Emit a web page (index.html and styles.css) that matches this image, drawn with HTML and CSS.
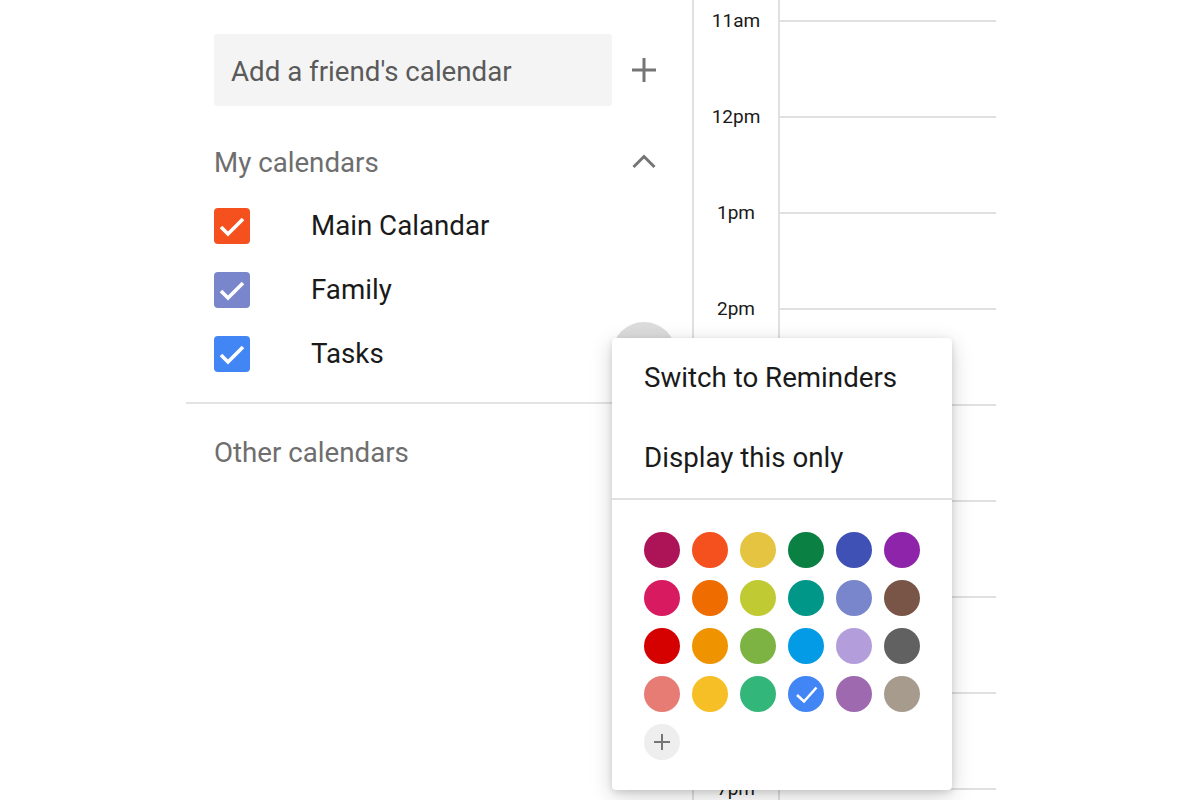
FILE: index.html
```html
<!DOCTYPE HTML>
<html>
<head>
  <meta charset="UTF-8">
  <title>Calendars</title>
  <link rel="stylesheet" href="styles.css">
</head>
<body>
  <div class="page">
    <aside class="sidebar">
      <div class="add-row">
        <div class="add-input">Add a friend's calendar</div>
        <span class="icon-btn">
          <svg width="24" height="24" viewBox="0 0 24 24"><path d="M12 0v24M0 12h24" stroke="#757575" stroke-width="3" fill="none"/></svg>
        </span>
      </div>

      <div class="section-head">
        <span>My calendars</span>
        <span class="icon-btn">
          <svg width="24" height="24" viewBox="0 0 24 24"><polyline points="1.5,16 12,5.5 22.5,16" stroke="#757575" stroke-width="3" fill="none"/></svg>
        </span>
      </div>

      <ul class="cal-list">
        <li class="cal-item">
          <span class="check orange"><svg width="36" height="36" viewBox="0 0 36 36"><polyline points="7,19 14,26 29,11" stroke="#fff" stroke-width="3.6" fill="none"/></svg></span>
          <span class="cal-name">Main Calandar</span>
        </li>
        <li class="cal-item">
          <span class="check lavender"><svg width="36" height="36" viewBox="0 0 36 36"><polyline points="7,19 14,26 29,11" stroke="#fff" stroke-width="3.6" fill="none"/></svg></span>
          <span class="cal-name">Family</span>
        </li>
        <li class="cal-item">
          <span class="check blue"><svg width="36" height="36" viewBox="0 0 36 36"><polyline points="7,19 14,26 29,11" stroke="#fff" stroke-width="3.6" fill="none"/></svg></span>
          <span class="cal-name">Tasks</span>
          <span class="more-btn"></span>
        </li>
      </ul>

      <div class="divider"></div>

      <div class="section-head other">Other calendars</div>
    </aside>

    <section class="timeline">
      <div class="hours">
        <div class="hour">11am</div>
        <div class="hour">12pm</div>
        <div class="hour">1pm</div>
        <div class="hour">2pm</div>
        <div class="hour">3pm</div>
        <div class="hour">4pm</div>
        <div class="hour">5pm</div>
        <div class="hour">6pm</div>
        <div class="hour">7pm</div>
      </div>
      <div class="grid">
        <div class="slot"></div>
        <div class="slot"></div>
        <div class="slot"></div>
        <div class="slot"></div>
        <div class="slot"></div>
        <div class="slot"></div>
        <div class="slot"></div>
        <div class="slot"></div>
        <div class="slot"></div>
      </div>
    </section>

    <div class="menu">
      <div class="menu-item">Switch to Reminders</div>
      <div class="menu-item">Display this only</div>
      <div class="menu-sep"></div>
      <div class="swatches">
        <span class="swatch" style="background:#ad1457"></span>
        <span class="swatch" style="background:#f4511e"></span>
        <span class="swatch" style="background:#e4c441"></span>
        <span class="swatch" style="background:#0b8043"></span>
        <span class="swatch" style="background:#3f51b5"></span>
        <span class="swatch" style="background:#8e24aa"></span>

        <span class="swatch" style="background:#d81b60"></span>
        <span class="swatch" style="background:#ef6c00"></span>
        <span class="swatch" style="background:#c0ca33"></span>
        <span class="swatch" style="background:#009688"></span>
        <span class="swatch" style="background:#7986cb"></span>
        <span class="swatch" style="background:#795548"></span>

        <span class="swatch" style="background:#d50000"></span>
        <span class="swatch" style="background:#f09300"></span>
        <span class="swatch" style="background:#7cb342"></span>
        <span class="swatch" style="background:#039be5"></span>
        <span class="swatch" style="background:#b39ddb"></span>
        <span class="swatch" style="background:#616161"></span>

        <span class="swatch" style="background:#e67c73"></span>
        <span class="swatch" style="background:#f6bf26"></span>
        <span class="swatch" style="background:#33b679"></span>
        <span class="swatch" style="background:#4285f4"><svg width="36" height="36" viewBox="0 0 36 36"><polyline points="9,19 16,25.5 28.5,11.5" stroke="#fff" stroke-width="2.6" fill="none"/></svg></span>
        <span class="swatch" style="background:#9e69af"></span>
        <span class="swatch" style="background:#a79b8e"></span>

        <span class="swatch add-swatch"><svg width="18" height="18" viewBox="0 0 18 18"><path d="M9 1v16M1 9h16" stroke="#757575" stroke-width="2" fill="none"/></svg></span>
      </div>
    </div>
  </div>
</body>
</html>
```

FILE: styles.css
```css
body { margin: 0; background: #fff; font-family: Roboto, "Liberation Sans", Arial, sans-serif; color: #212121; overflow: hidden; }

.page { position: relative; display: flex; height: 800px; overflow: hidden; }

/* left column */
.sidebar {
  margin-left: 186px;
  width: 506px;
  padding: 34px 36px 0 28px;
  box-sizing: border-box;
  font-size: 27.7px;
}

.add-row { display: flex; align-items: center; justify-content: space-between; }
.add-input {
  width: 398px;
  height: 72px;
  box-sizing: border-box;
  padding: 3px 0 0 17px;
  line-height: 69px;
  background: #f4f4f4;
  border-radius: 3px;
  color: #5a5a5a;
}
.icon-btn { display: flex; width: 24px; height: 24px; }

.section-head {
  display: flex;
  align-items: center;
  justify-content: space-between;
  height: 48px;
  line-height: 48px;
  margin-top: 33px;
  color: #6e6e6e;
}
.section-head.other { margin-top: 25px; }

.cal-list { list-style: none; margin: 7px 0 0; padding: 0; }
.cal-item { display: flex; align-items: center; height: 64px; line-height: 64px; }
.check { display: flex; width: 36px; height: 36px; border-radius: 4px; }
.check.orange { background: #f4511e; }
.check.lavender { background: #7986cb; }
.check.blue { background: #4285f4; }
.cal-name { margin-left: 61px; flex: 1; color: #1a1a1a; }
.more-btn { width: 64px; height: 64px; border-radius: 50%; background: #dcdcdc; margin-right: -20px; }

.divider { height: 2px; background: #e3e3e3; margin: 16px -36px 0 -28px; }

/* day view */
.timeline { display: flex; border-left: 2px solid #e0e0e0; height: 800px; }
.hours { width: 84px; border-right: 2px solid #e0e0e0; padding-top: 7px; }
.hour { height: 96px; line-height: 28px; font-size: 19px; text-align: center; color: #1a1a1a; }
.grid { width: 216px; padding-top: 20px; }
.slot { height: 96px; box-sizing: border-box; border-top: 2px solid #e0e0e0; }

/* popup menu */
.menu {
  position: absolute;
  left: 612px;
  top: 338px;
  width: 340px;
  background: #fff;
  border-radius: 4px;
  box-shadow: 0 2px 6px rgba(0,0,0,0.12), 0 6px 22px rgba(0,0,0,0.18);
  font-size: 27.7px;
  padding-bottom: 30px;
}
.menu-item { height: 80px; line-height: 80px; padding-left: 32px; color: #1a1a1a; }
.menu-sep { height: 2px; background: #e0e0e0; }
.swatches {
  display: grid;
  grid-template-columns: repeat(6, 36px);
  gap: 12px;
  padding: 32px 0 0 32px;
}
.swatch { display: flex; align-items: center; justify-content: center; width: 36px; height: 36px; border-radius: 50%; }
.add-swatch { background: #eeeeee; }
```
